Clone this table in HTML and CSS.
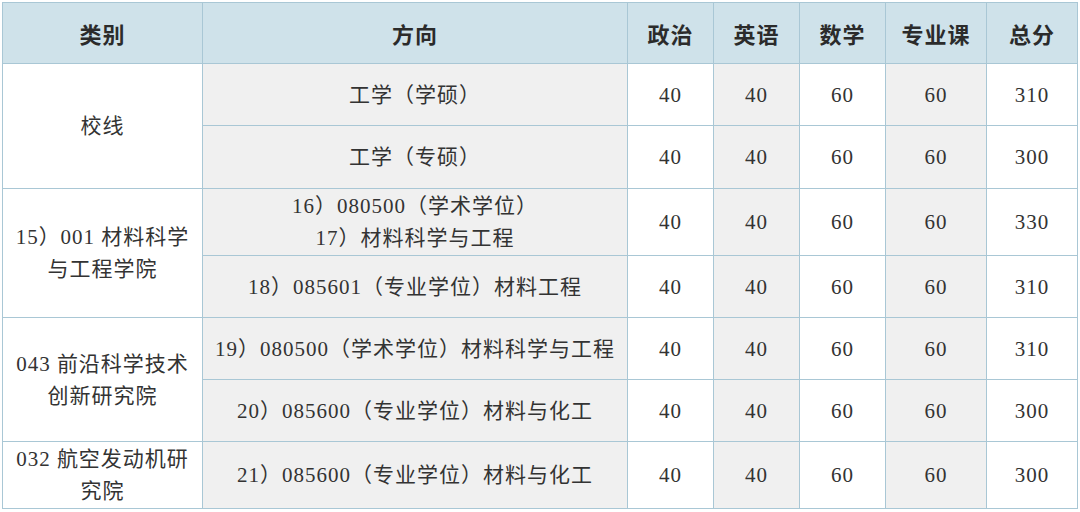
FILE: index.html
```html
<!DOCTYPE html>
<html lang="zh">
<head>
<meta charset="utf-8">
<link rel="stylesheet" href="styles.css">
</head>
<body>
<table class="score">
  <colgroup>
    <col class="c-type"><col class="c-dir"><col class="c-n"><col class="c-n"><col class="c-n"><col class="c-pro"><col class="c-tot">
  </colgroup>
  <thead>
    <tr class="h-head">
      <th>类别</th><th class="g">方向</th><th>政治</th><th class="g">英语</th><th>数学</th><th class="g">专业课</th><th>总分</th>
    </tr>
  </thead>
  <tbody>
    <tr class="h62">
      <td rowspan="2">校线</td><td class="g">工学（学硕）</td><td>40</td><td class="g">40</td><td>60</td><td class="g">60</td><td>310</td>
    </tr>
    <tr class="h63">
      <td class="g">工学（专硕）</td><td>40</td><td class="g">40</td><td>60</td><td class="g">60</td><td>300</td>
    </tr>
    <tr class="h67">
      <td rowspan="2">15）001 材料科学<br>与工程学院</td><td class="g">16）080500（学术学位）<br>17）材料科学与工程</td><td>40</td><td class="g">40</td><td>60</td><td class="g">60</td><td>330</td>
    </tr>
    <tr class="h62">
      <td class="g">18）085601（专业学位）材料工程</td><td>40</td><td class="g">40</td><td>60</td><td class="g">60</td><td>310</td>
    </tr>
    <tr class="h62">
      <td rowspan="2">043 前沿科学技术<br>创新研究院</td><td class="g">19）080500（学术学位）材料科学与工程</td><td>40</td><td class="g">40</td><td>60</td><td class="g">60</td><td>310</td>
    </tr>
    <tr class="h62">
      <td class="g">20）085600（专业学位）材料与化工</td><td>40</td><td class="g">40</td><td>60</td><td class="g">60</td><td>300</td>
    </tr>
    <tr class="h67">
      <td>032 航空发动机研<br>究院</td><td class="g">21）085600（专业学位）材料与化工</td><td>40</td><td class="g">40</td><td>60</td><td class="g">60</td><td>300</td>
    </tr>
  </tbody>
</table>
</body>
</html>
```
FILE: styles.css
```css
html, body {
  margin: 0;
  padding: 0;
  background: #ffffff;
}
body {
  padding: 2px 0 0 2px;
}
.score {
  border-collapse: collapse;
  table-layout: fixed;
  width: 1075px;
  font-family: "Liberation Serif", "Noto Sans CJK SC", serif;
  font-size: 21px;
  letter-spacing: 1px;
  color: #333333;
}
.c-type { width: 200px; }
.c-dir { width: 425px; }
.c-n { width: 86px; }
.c-pro { width: 101px; }
.c-tot { width: 91px; }
.score th, .score td {
  border: 1px solid #a9c7d5;
  text-align: center;
  vertical-align: middle;
  padding: 0 4px;
  line-height: 32px;
  white-space: nowrap;
}
.score td.g { background: #f0f0f0; }
.score th {
  background: #cfe2ea;
  font-family: "Noto Sans CJK SC", sans-serif;
  font-weight: 700;
  font-size: 22px;
  letter-spacing: 1px;
  color: #2b2b2b;
}
.h-head { height: 61px; }
.h62 { height: 62px; }
.h63 { height: 63px; }
.h67 { height: 67px; }
```
